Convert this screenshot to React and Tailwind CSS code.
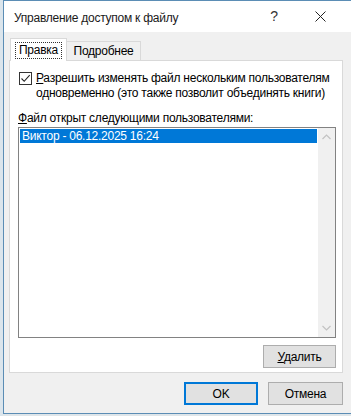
import React from "react";

const font = { fontFamily: '"Liberation Sans", Arial, sans-serif' };

export default function App() {
  return (
    <div className="w-[351px] h-[416px] overflow-hidden flex bg-[#dfe6ea] text-[12px] text-[#000] whitespace-nowrap tracking-[-0.25px]" style={font}>
      <div className="w-[3px] shrink-0 bg-[#dbe5ec]" />
      <div className="flex flex-col w-[360px] shrink-0 h-[414px] border-l border-t border-b border-[#5b8db5]">
        {/* Title bar */}
        <div className="h-[31px] bg-white flex items-center shrink-0">
          <div className="pl-[10px] pt-[2px] text-[12px] text-[#1a1a1a] leading-none">Управление доступом к файлу</div>
          <div className="ml-auto flex items-center">
            <div className="w-[46px] text-center text-[14px] text-[#333]">?</div>
            <div className="w-[46px] flex justify-center mr-[20px]">
              <svg width="11" height="11" viewBox="0 0 11 11">
                <path d="M0.5 0.5 L10.5 10.5 M10.5 0.5 L0.5 10.5" stroke="#222" strokeWidth="1" />
              </svg>
            </div>
          </div>
        </div>
        {/* Body */}
        <div className="flex-1 bg-[#f0f0f0] flex flex-col pl-[5px] pr-[8px] w-[347px]">
          {/* Tabs */}
          <div className="flex items-end pt-[6px] pl-[1px] h-[29px] relative z-10">
            <div className="h-[23px] w-[57px] bg-white border border-b-0 border-[#d9d9d9] flex items-center justify-center">
              <div className="border border-dotted border-[#333] px-[3px] h-[17px] flex items-center leading-none">Правка</div>
            </div>
            <div className="h-[19px] w-[75px] -ml-px bg-[#f0f0f0] border border-b-0 border-[#d9d9d9] flex items-center justify-center leading-none mb-px">
              Подробнее
            </div>
          </div>
          {/* Panel */}
          <div className="-mt-px h-[313px] bg-white border border-[#d9d9d9] flex flex-col pl-[8px] pr-[7px]">
            <div className="flex mt-[10px]">
              <div className="w-[13px] h-[13px] border border-[#333] bg-white flex items-center justify-center shrink-0 ml-[1px] mt-[1px]">
                <svg width="11" height="11" viewBox="0 0 11 11">
                  <path d="M1.5 5.5 L4.2 8.3 L9.7 2.2" stroke="#222" strokeWidth="1.1" fill="none" />
                </svg>
              </div>
              <div className="ml-[4px] leading-[15px]">
                <div><span className="underline">Р</span>азрешить изменять файл нескольким пользователям</div>
                <div>одновременно (это также позволит объединять книги)</div>
              </div>
            </div>
            <div className="mt-[10px] leading-[15px]">
              <span className="underline">Ф</span>айл открыт следующими пользователями:
            </div>
            <div className="mt-[1px] h-[211px] w-[318px] border border-[#828282] bg-white flex">
              <div className="flex-1 pt-[1px] pl-[1px] pr-[1px]">
                <div className="h-[14px] bg-[#0078d7] text-white flex items-center pl-[2px] leading-none">
                  Виктор - 06.12.2025 16:24
                </div>
              </div>
              <div className="w-[17px] bg-[#f0f0f0] flex flex-col items-center justify-between py-[6px]">
                <svg width="9" height="6" viewBox="0 0 9 6">
                  <path d="M0.5 5 L4.5 1 L8.5 5" stroke="#c2c2c2" strokeWidth="1.2" fill="none" />
                </svg>
                <svg width="9" height="6" viewBox="0 0 9 6">
                  <path d="M0.5 1 L4.5 5 L8.5 1" stroke="#c2c2c2" strokeWidth="1.2" fill="none" />
                </svg>
              </div>
            </div>
            <div className="flex justify-end mt-[7px] w-[318px]">
              <button className="w-[73px] h-[23px] bg-[#e1e1e1] border border-[#adadad] flex items-center justify-center leading-none">
                <span><span className="underline">У</span>далить</span>
              </button>
            </div>
          </div>
          {/* Bottom buttons */}
          <div className="flex justify-end gap-[10px] mt-[9px]">
            <button className="w-[74px] h-[23px] bg-[#e1e1e1] border-2 border-[#0078d7] flex items-center justify-center leading-none">OK</button>
            <button className="w-[75px] h-[23px] bg-[#e1e1e1] border border-[#adadad] flex items-center justify-center leading-none">Отмена</button>
          </div>
        </div>
      </div>
    </div>
  );
}
